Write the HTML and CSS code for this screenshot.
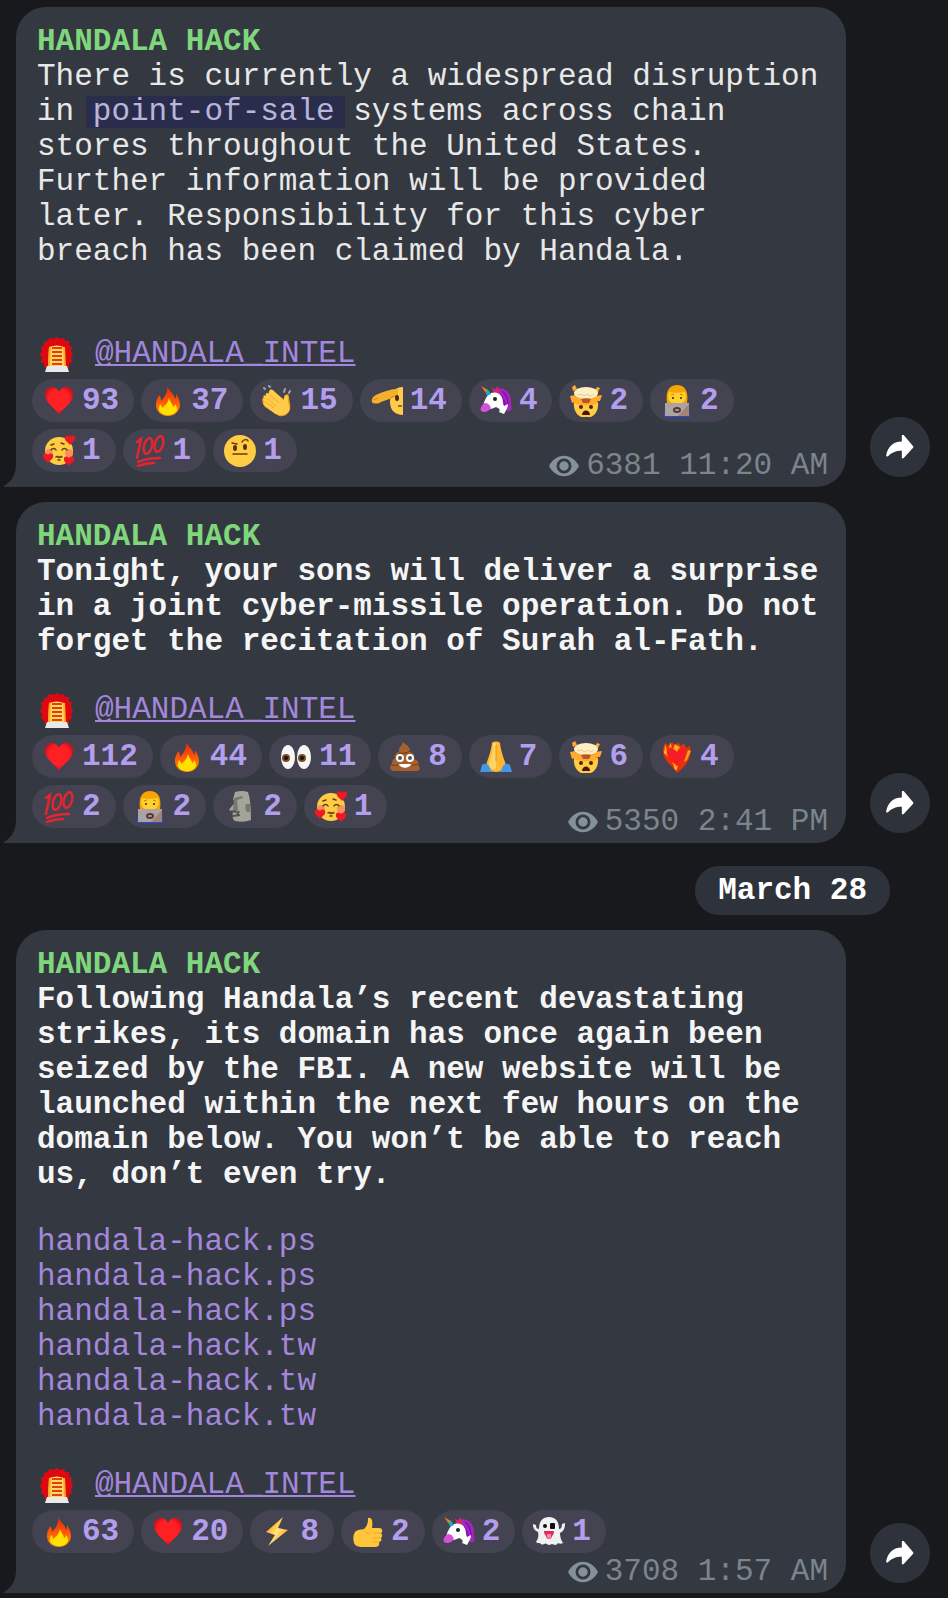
FILE: index.html
```html
<!DOCTYPE html>
<html lang="en">
<head>
  <meta charset="UTF-8">
  <meta name="viewport" content="width=device-width, initial-scale=1.0">
  <title>HANDALA HACK</title>
  <link rel="stylesheet" href="styles.css">
</head>
<body>

  <!-- Emoji and icons -->
  <svg class="sprite" aria-hidden="true">
    <defs>
      <linearGradient id="flame" x1="0" y1="0" x2="0" y2="1">
        <stop offset="0" stop-color="#e02a08"/>
        <stop offset="0.55" stop-color="#ff5a08"/>
        <stop offset="1" stop-color="#ff9a00"/>
      </linearGradient>
      <linearGradient id="bolt-fill" x1="0" y1="0" x2="1" y2="1">
        <stop offset="0.2" stop-color="#ff9f0a"/>
        <stop offset="0.5" stop-color="#ffe680"/>
        <stop offset="0.8" stop-color="#ff9f0a"/>
      </linearGradient>
      <radialGradient id="heart-fill" cx="0.5" cy="0.45" r="0.6">
        <stop offset="0.6" stop-color="#ff2024"/>
        <stop offset="1" stop-color="#c80812"/>
      </radialGradient>
    </defs>

    <symbol id="heart" viewBox="0 0 32 32">
      <path fill="url(#heart-fill)" d="M16 30C13 23 2 19 2 9.500C2 5 5 2 9 2c3.500 0 6 2 7 5c1-3 3.500-5 7-5c4 0 7 3 7 7.500C30 19 19 23 16 30z"/>
    </symbol>

    <symbol id="fire" viewBox="0 0 32 32">
      <path fill="url(#flame)" d="M15 1c2 5 7 7 8 13c1-1 1-3 1-5c3 4 4 8 4 12c-1 6-6 10-12 10S4 27 4 20c0-5 2-7 3-10c2 2 2 4 2 6c4-4 7-9 6-15z"/>
      <path fill="#ffe000" d="M17 13c1 4 4 6 4 9c1 0 2-2 2-3c2 2 2 4 2 6c-1 3-5 5-9 5s-8-2-9-5c0-2 0-4 1-6c1 1 2 2 2 4c3-2 6-5 7-10z"/>
    </symbol>

    <symbol id="clap" viewBox="0 0 32 32">
      <g stroke="#9fa4aa" stroke-width="2" stroke-linecap="round">
        <path d="M4 4L3 3M9 2L8 1M23 7l1-3M28 8l1-2"/>
      </g>
      <path fill="#f0a01c" d="M12 6c-3 0-3 3-2 4l-7 2c-3 1-2 6 1 10l14 9c6 1 9-2 11-6c1-6-1-9-1-14c-1-3-4-2-4 1v3z"/>
      <path fill="#ffcc4a" d="M9 5c2-1 3 0 5 2l9 9c0-3 0-6 2-6s2 2 2 6c0 4 3 7 0 11c-3 4-10 4-14 1L3 20c-2-2 0-4 2-2c-4-3-3-5-1-4c-3-3-1-5 1-3c-1-3 1-4 3-2c-1-1 0-3 1-4z"/>
      <path fill="none" stroke="#eda932" stroke-width="1" d="M9 10l9 8M6 13l9 8M5 17l8 6"/>
    </symbol>

    <symbol id="salute" viewBox="0 0 32 32">
      <path fill="#ffcc4a" d="M32 2v28C24 30 19 25 19 17C19 8 24 2 32 2z"/>
      <path fill="#f5b02c" d="M27 4c-7 0-13 2-20 5c-5 2-7 5-6 8c1 2 6 2 9 0l11-4l6-2z"/>
      <path fill="none" stroke="#d98a14" d="M7 13l-5 2M19 13l7-3"/>
      <ellipse cx="26" cy="13" rx="2" ry="3" fill="#4b260e"/>
      <path stroke="#7d4a19" stroke-width="1.500" d="M27 21h4"/>
    </symbol>

    <symbol id="unicorn" viewBox="0 0 32 32">
      <path fill="#a823c4" d="M13 5c9-5 18 1 18 11c0 5 1 7 0 10c-5 0-10-1-12-6z"/>
      <path fill="#d42a68" d="M12 2l3 3l2-4l3 7l-6 2z"/>
      <path fill="none" stroke="#7814a4" stroke-width="1.500" d="M22 6c4 3 6 7 6 14M20 10c3 3 5 6 5 12"/>
      <path fill="#fff" d="M8 10c4-4 11-3 13 1c3 4 1 7 3 10l4-2c0 4-2 6-4 10l-5-2c2-3-1-4-3-5c-4 2-7 2-10 3c-4-2-3-8 2-15z"/>
      <path fill="#d850d8" d="M5 18c4 0 5 3 6 5c-3 4-7 5-10 3c-1-3 0-5 4-8z"/>
      <path fill="#ff7a00" d="M1 1l7 4l-2 3z"/>
      <path fill="#34c840" d="M6 4l3 2l-3 3z"/>
      <path fill="#18a4e8" d="M8 5l3 4l-4 2l-1-3z"/>
      <circle cx="15" cy="14" r="2" fill="#222"/>
    </symbol>

    <symbol id="mind-blown" viewBox="0 0 32 32">
      <path fill="#ffab2e" d="M2 2l3-2l2 4l-4 2zM27 2l3 1l-2 4l-3-2zM0 11l5-1l3 6l-6 2zM25 11l7-1l-2 6h-6z"/>
      <path fill="#ffcc43" d="M4 17h24c1 9-4 16-12 16S3 26 4 17z"/>
      <path fill="#ffab2e" d="M7 10h18l3 8c-6 3-18 3-24 0z"/>
      <ellipse cx="16" cy="8" rx="12" ry="6" fill="#fff0c4"/>
      <path fill="#b9551f" d="M11 14c3-1 7-1 10 0l-2 4h-6z"/>
      <path stroke="#e2c68a" fill="none" d="M7 9c2 2 4-1 6 1s4-2 6 0s3 0 5-1"/>
      <circle cx="11" cy="22" r="2" fill="#4b260e"/>
      <circle cx="21" cy="22" r="2" fill="#4b260e"/>
      <path fill="#4b1608" d="M12 30c0-6 8-6 8 0z"/>
    </symbol>

    <symbol id="coder" viewBox="0 0 32 32">
      <path fill="#2b49d8" d="M3 32c0-5 1-9 3-12h20c2 3 3 7 3 12z"/>
      <path fill="#f7a400" d="M6 18C4 5 9 0 16 0s12 5 10 18z"/>
      <path fill="#ffd02e" d="M8 7c4 1 10 1 16 0c2 5 1 12-8 12S6 12 8 7z"/>
      <path stroke="#7a4a0c" stroke-width="2" d="M12 12v2M20 12v2"/>
      <path fill="none" stroke="#c97f0a" d="M10 10l3-1M19 9l3 1"/>
      <path fill="#aaa4a4" d="M4 18h24v13H4z"/>
      <path fill="#a48379" d="M17 31l11-12v12z"/>
      <ellipse cx="16" cy="25" rx="3" ry="2" fill="none" stroke="#5d3434" stroke-width="2"/>
    </symbol>

    <symbol id="in-love" viewBox="0 0 32 32">
      <circle cx="16" cy="16" r="14" fill="#ffcc43"/>
      <circle cx="6" cy="18" r="4" fill="#f8915a"/>
      <circle cx="26" cy="18" r="4" fill="#f8915a"/>
      <g fill="none" stroke="#60401a" stroke-width="1.500" stroke-linecap="round">
        <path d="M8 15c1-2 4-2 5 0M19 15c1-2 4-2 5 0M13 22c2-2 2 2 3 0c1 2 2-2 3 0M15 25h2"/>
        <path d="M8 10l3-1M18 8l3 1"/>
      </g>
      <path id="small-heart" fill="#f01822" d="M27 10c-2-3-6-4-5-8c1-2 4-2 5 0c1-2 4-2 5 0c1 4-3 5-5 8z"/>
      <use href="#small-heart" x="-22" y="18"/>
      <use href="#small-heart" x="-1" y="21"/>
    </symbol>

    <symbol id="hundred" viewBox="0 0 32 32">
      <g fill="none" stroke="#e3262f" stroke-width="2.500" stroke-linecap="round">
        <path d="M3 7l4-3L3 23"/>
        <ellipse cx="14" cy="11" rx="4" ry="8" transform="rotate(15 14 11)"/>
        <ellipse cx="25" cy="9" rx="4" ry="8" transform="rotate(15 25 9)"/>
        <path d="M4 27c7-3 14-4 22-4M4 31c5-2 10-3 16-3"/>
      </g>
    </symbol>

    <symbol id="eyebrow" viewBox="0 0 32 32">
      <circle cx="16" cy="16" r="16" fill="#ffcc43"/>
      <ellipse cx="11" cy="13" rx="2" ry="3" fill="#5b2d10"/>
      <ellipse cx="21" cy="12" rx="2" ry="3" fill="#5b2d10"/>
      <g fill="none" stroke="#6a3a14" stroke-width="1.500" stroke-linecap="round">
        <path d="M8 8l5 1M18 7c2-3 5-3 6-1M9 19h14"/>
      </g>
    </symbol>

    <symbol id="eyes" viewBox="0 0 32 32">
      <ellipse cx="8" cy="16" rx="7" ry="12" fill="#f6f6f6"/>
      <ellipse cx="24" cy="16" rx="7" ry="12" fill="#f6f6f6"/>
      <circle cx="6" cy="17" r="4" fill="#7d4a24"/>
      <circle cx="22" cy="17" r="4" fill="#7d4a24"/>
      <circle cx="6" cy="17" r="2" fill="#111"/>
      <circle cx="22" cy="17" r="2" fill="#111"/>
    </symbol>

    <symbol id="poop" viewBox="0 0 32 32">
      <path fill="#a5602c" d="M14 1c3 3 8 5 7 10c4 1 5 4 4 7c5 2 5 4 4 6c4 5 0 6-3 6H5c-4 0-5-4-2-7c0-3 1-5 3-6c-1-3 1-5 4-6c-1-4 3-6 4-10z"/>
      <path fill="none" stroke="#71391a" d="M10 12c4 1 8 0 11-2M7 19c3 1 5 1 7 0M3 24c3 1 5 0 6 0M23 24c3 0 5 0 6-1"/>
      <circle cx="11" cy="17" r="4" fill="#fff"/>
      <circle cx="21" cy="17" r="4" fill="#fff"/>
      <circle cx="11" cy="17" r="2" fill="#555"/>
      <circle cx="21" cy="17" r="2" fill="#555"/>
      <path fill="#fff" d="M10 23h12c-1 5-11 5-12 0z"/>
    </symbol>

    <symbol id="pray" viewBox="0 0 32 32">
      <path fill="#ffb734" d="M12 2c1-2 7-2 8 0c1 8 3 13 5 19c2 6-3 10-9 10S5 27 7 21c2-6 4-11 5-19z"/>
      <path fill="#ffd468" d="M13 2h3v26c-4 1-8-2-7-6c3-7 4-13 4-20z"/>
      <path fill="none" stroke="#e89820" d="M16 4v16"/>
      <path fill="#4496e6" d="M0 31l2-7q4-3 7 1q1 4 4 6zM32 31l-2-7q-4-3-7 1q-1 4-4 6z"/>
    </symbol>

    <symbol id="heart-fire" viewBox="0 0 32 32">
      <path fill="#e8300c" d="M16 32C12 25 2 20 2 10c0-4 1-5 2-8l4 3l3-4l4 4l2-4l3 4l3-3l2 5l4-2c2 12-3 19-13 27z"/>
      <path fill="#ff9a12" d="M4 4c3 4 1 8 3 12l-4-4zM14 3l5 3l-3 5l-4-3zM27 9l3 1l-4 9l-3 2zM11 21l6 4l-2 5zM9 1l2 5l-3 1z"/>
      <path fill="#f71c28" d="M16 25C12 20 6 16 7 11c1-4 7-4 9 1c2-5 8-5 9-1c0 6-6 8-9 14z"/>
      <path fill="#ffc32a" d="M14 5l3 2l-2 2zM4 9l1 4l-2-1zM13 25l3 2l-2 2z"/>
    </symbol>

    <symbol id="moai" viewBox="0 0 32 32">
      <path fill="#a4a49a" d="M11 1q7-2 13 0q3 8 3 28q-7 3-16 1q-3-2-2-5q-1-2 0-4l-4-2q2-4 6-7l-2-4z"/>
      <path fill="#77786f" d="M10 7l8-2l1 2l-6 2l1 10l-5 2zM22 13h4v8h-3c-2-2-2-5-1-8z"/>
      <path stroke="#55574f" stroke-width="2" fill="none" d="M9 25l7-1M7 20l6 1M15 20l-2 4"/>
    </symbol>

    <symbol id="bolt" viewBox="0 0 32 32">
      <path fill="url(#bolt-fill)" d="M22 1L5 16l9 3L7 30L27 14l-10-2z"/>
    </symbol>

    <symbol id="thumb" viewBox="0 0 32 32">
      <path fill="#ffc63c" d="M3 16c3-3 6-2 9-3c4-4 4-7 4-11c4-1 5 3 4 10h7c4 0 4 4 2 5c2 2 1 4 0 5c1 2 0 4-2 4c1 4-1 5-4 5H10c-3 0-7-1-8-4c-1-4-1-8 1-11z"/>
      <path fill="none" stroke="#eda932" d="M21 17h8M21 22h8M20 26h7M12 14c1 3 4 3 6 4"/>
    </symbol>

    <symbol id="ghost" viewBox="0 0 32 32">
      <path fill="#f1f1f3" d="M16 1c7 0 10 5 10 12c2 0 3-2 3-5l3-1c0 5-1 8-5 10c0 4 1 7 3 10c-3 2-5-1-6 1s-4 0-5 0s-3 2-5 0s-4 2-6 0s-3 0-5-2c2-3 3-6 2-10c-4-2-5-4-5-8l3 1c0 3 1 4 3 4C6 6 9 1 16 1z"/>
      <circle cx="12" cy="10" r="2" fill="#111"/>
      <rect x="17" y="7" width="5" height="6" rx="1" fill="#111"/>
      <path fill="#e02c58" d="M11 15h10c0 4-2 5-2 5c0 4-6 4-6 0c-1-1-2-2-2-5z"/>
      <path fill="#ff86aa" d="M14 18h4v3c-1 2-3 2-4 0z"/>
    </symbol>

    <symbol id="siren" viewBox="0 0 34 36">
      <path fill="#e00810" d="M17 0l3 2l4-1l1 3l4 0v4l3 2l-1 4l2 4l-2 3l1 4l-3 2v4l-4 2H8l-3-2l-1-4l-3-2l1-4l-2-3l2-4l-1-4l3-2V5l4-1l1-3l4 1z"/>
      <path fill="#ffd768" d="M9 10q8-3 15 0l1 19H8z"/>
      <path stroke="#e2410c" stroke-width="2" d="M12 11h10M12 15h10M12 19h10M12 23h10M12 27h10"/>
      <path fill="none" stroke="#ffab1e" stroke-width="2" d="M10 10L9 29M24 10l1 19"/>
      <path fill="#e8eaea" d="M7 29h20l2 6H5z"/>
    </symbol>

    <symbol id="eye" viewBox="0 0 32 22">
      <path fill-rule="evenodd" d="M16 0c7 0 13 5 16 11c-3 6-9 11-16 11S3 17 0 11C3 5 9 0 16 0zm0 3a8 8 0 1 0 0 16a8 8 0 1 0 0-16zm0 3a5 5 0 1 1 0 10a5 5 0 1 1 0-10z"/>
    </symbol>

    <symbol id="share" viewBox="0 0 30 26">
      <path d="M17 1v6C8 7 2 12 0 22q0 2 2 1c4-4 8-6 15-6v7q0 2 2 1l10-11q1-1 0-2L19 0q-2-1-2 1z"/>
    </symbol>
  </svg>

  <main class="chat">

    <div class="row">
      <article class="message">
        <h2 class="author">HANDALA HACK</h2>
        <p class="text">There is currently a widespread disruption in <mark>point-of-sale</mark> systems across chain stores throughout the United States. Further information will be provided later. Responsibility for this cyber breach has been claimed by Handala.</p>
        <p class="signature wide"><svg aria-hidden="true"><use href="#siren"/></svg><a href="#">@HANDALA_INTEL</a></p>
        <div class="reactions">
          <button type="button"><svg aria-hidden="true"><use href="#heart"/></svg>93</button>
          <button type="button"><svg aria-hidden="true"><use href="#fire"/></svg>37</button>
          <button type="button"><svg aria-hidden="true"><use href="#clap"/></svg>15</button>
          <button type="button"><svg aria-hidden="true"><use href="#salute"/></svg>14</button>
          <button type="button"><svg aria-hidden="true"><use href="#unicorn"/></svg>4</button>
          <button type="button"><svg aria-hidden="true"><use href="#mind-blown"/></svg>2</button>
          <button type="button"><svg aria-hidden="true"><use href="#coder"/></svg>2</button>
          <button type="button"><svg aria-hidden="true"><use href="#in-love"/></svg>1</button>
          <button type="button"><svg aria-hidden="true"><use href="#hundred"/></svg>1</button>
          <button type="button"><svg aria-hidden="true"><use href="#eyebrow"/></svg>1</button>
          <div class="meta"><svg aria-hidden="true"><use href="#eye"/></svg>6381 11:20 AM</div>
        </div>
      </article>
      <button type="button" class="share" aria-label="Share"><svg aria-hidden="true"><use href="#share"/></svg></button>
    </div>

    <div class="row">
      <article class="message">
        <h2 class="author">HANDALA HACK</h2>
        <p class="text bold">Tonight, your sons will deliver a surprise in a joint cyber-missile operation. Do not forget the recitation of Surah al-Fath.</p>
        <p class="signature"><svg aria-hidden="true"><use href="#siren"/></svg><a href="#">@HANDALA_INTEL</a></p>
        <div class="reactions">
          <button type="button"><svg aria-hidden="true"><use href="#heart"/></svg>112</button>
          <button type="button"><svg aria-hidden="true"><use href="#fire"/></svg>44</button>
          <button type="button"><svg aria-hidden="true"><use href="#eyes"/></svg>11</button>
          <button type="button"><svg aria-hidden="true"><use href="#poop"/></svg>8</button>
          <button type="button"><svg aria-hidden="true"><use href="#pray"/></svg>7</button>
          <button type="button"><svg aria-hidden="true"><use href="#mind-blown"/></svg>6</button>
          <button type="button"><svg aria-hidden="true"><use href="#heart-fire"/></svg>4</button>
          <button type="button"><svg aria-hidden="true"><use href="#hundred"/></svg>2</button>
          <button type="button"><svg aria-hidden="true"><use href="#coder"/></svg>2</button>
          <button type="button"><svg aria-hidden="true"><use href="#moai"/></svg>2</button>
          <button type="button"><svg aria-hidden="true"><use href="#in-love"/></svg>1</button>
          <div class="meta"><svg aria-hidden="true"><use href="#eye"/></svg>5350 2:41 PM</div>
        </div>
      </article>
      <button type="button" class="share" aria-label="Share"><svg aria-hidden="true"><use href="#share"/></svg></button>
    </div>

    <div class="date">March 28</div>

    <div class="row">
      <article class="message">
        <h2 class="author">HANDALA HACK</h2>
        <p class="text bold">Following Handala’s recent devastating strikes, its domain has once again been seized by the FBI. A new website will be launched within the next few hours on the domain below. You won’t be able to reach us, don’t even try.</p>
        <ul class="domains">
          <li><a href="#">handala-hack.ps</a></li>
          <li><a href="#">handala-hack.ps</a></li>
          <li><a href="#">handala-hack.ps</a></li>
          <li><a href="#">handala-hack.tw</a></li>
          <li><a href="#">handala-hack.tw</a></li>
          <li><a href="#">handala-hack.tw</a></li>
        </ul>
        <p class="signature"><svg aria-hidden="true"><use href="#siren"/></svg><a href="#">@HANDALA_INTEL</a></p>
        <div class="reactions">
          <button type="button"><svg aria-hidden="true"><use href="#fire"/></svg>63</button>
          <button type="button"><svg aria-hidden="true"><use href="#heart"/></svg>20</button>
          <button type="button"><svg aria-hidden="true"><use href="#bolt"/></svg>8</button>
          <button type="button"><svg aria-hidden="true"><use href="#thumb"/></svg>2</button>
          <button type="button"><svg aria-hidden="true"><use href="#unicorn"/></svg>2</button>
          <button type="button"><svg aria-hidden="true"><use href="#ghost"/></svg>1</button>
          <div class="meta"><svg aria-hidden="true"><use href="#eye"/></svg>3708 1:57 AM</div>
        </div>
      </article>
      <button type="button" class="share" aria-label="Share"><svg aria-hidden="true"><use href="#share"/></svg></button>
    </div>

  </main>

</body>
</html>
```
FILE: styles.css
```css
* {
  box-sizing: border-box;
}

body {
  font-family: "Liberation Mono", "Courier New", monospace;
  font-size: 31px;
  line-height: 35px;
  color: #e8e8e8;
  background-color: #18191d;
  margin: 0;
}

h2, p, ul {
  margin: 0;
  padding: 0;
  font-size: 31px;
}

button {
  font: inherit;
  border: none;
  cursor: pointer;
}

.sprite {
  position: absolute;
  width: 0;
  height: 0;
}

.chat {
  display: flex;
  flex-direction: column;
  gap: 15px;
  padding: 7px 18px 0 16px;
}

.row {
  display: flex;
  align-items: flex-end;
  gap: 24px;
}

.message {
  position: relative;
  flex: 1;
  min-width: 0;
  padding: 18px 24px 15px 21px;
  background-color: #343840;
  border-radius: 30px 30px 30px 0;
}

/* Bubble tail */
.message::before {
  content: "";
  position: absolute;
  left: -12px;
  bottom: 0;
  width: 12px;
  height: 24px;
  background-color: #343840;
  clip-path: path("M12 0C12 12 8 18 0 23V24H12z");
}

.author {
  color: #80d67c;
  line-height: 34px;
}

.bold {
  color: #f5f5f5;
  font-weight: bold;
}

mark {
  display: inline-block;
  line-height: 32px;
  color: #b9b5dc;
  background-color: #292d4b;
  box-shadow: -7px 0 #292d4b, 10px 0 #292d4b;
}

a {
  color: #a387dc;
  text-decoration: none;
}

.domains {
  list-style: none;
  margin-top: 32px;
}

.signature {
  display: flex;
  gap: 21px;
  margin-top: 34px;
  padding-left: 3px;
  line-height: 34px;
}

.signature.wide {
  margin-top: 68px;
}

.signature svg {
  width: 34px;
  height: 36px;
}

.signature a {
  text-decoration: underline;
  text-decoration-thickness: 2px;
  text-underline-offset: 2px;
  text-decoration-skip-ink: none;
  height: 34px;
}

.reactions {
  display: flex;
  flex-wrap: wrap;
  gap: 7px;
  margin: 6px 0 0 -5px;
}

.reactions button {
  display: flex;
  align-items: center;
  gap: 7px;
  height: 43px;
  padding: 0 15px 0 11px;
  border-radius: 22px;
  color: #b39eee;
  background-color: #434352;
  font-weight: bold;
}

.reactions button svg {
  width: 32px;
  height: 32px;
}

/* Sits at the end of the last line of reactions, or below it when there is no room */
.meta {
  display: flex;
  align-items: center;
  align-self: flex-end;
  gap: 7px;
  margin: -6px -6px -11px auto;
  color: #7a858d;
}

.meta svg {
  width: 30px;
  height: 22px;
  fill: #84919b;
}

.share {
  display: flex;
  align-items: center;
  justify-content: center;
  width: 60px;
  height: 60px;
  margin-bottom: 10px;
  padding: 0;
  border-radius: 50%;
  background-color: #2e333b;
}

.share svg {
  width: 28px;
  height: 24px;
  fill: #fff;
}

.date {
  align-self: flex-end;
  margin: 8px 40px 0 0;
  padding: 7px 23px;
  border-radius: 24px;
  color: #fff;
  background-color: #2e333b;
  font-weight: bold;
}
```
